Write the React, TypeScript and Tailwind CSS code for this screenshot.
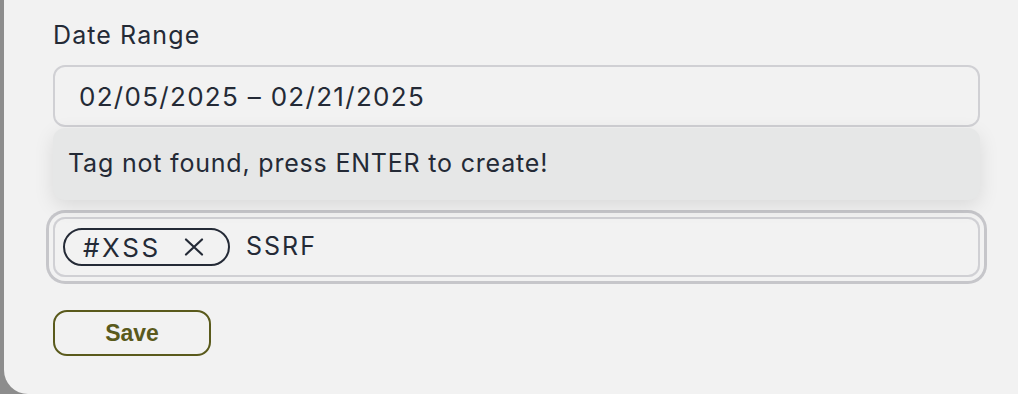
import React from "react";

export default function App() {
  const font = { fontFamily: "Inter, 'Noto Sans', sans-serif" };
  return (
    <div className="w-[1018px] h-[394px] bg-[#8d8d8d] flex overflow-hidden" style={font}>
      <div className="ml-[4px] flex-1 bg-[#f2f2f2] rounded-bl-[24px] pl-[49px] pr-[38px] pt-[20px] text-[#242a36]">
        <div className="text-[25px] leading-[30px] tracking-[0.044em]">Date Range</div>
        <div className="mt-[15px] h-[62px] border-2 border-[#d0d0d4] rounded-[12px] flex items-center px-[24px] text-[26px] tracking-[0.05em]">
          02/05/2025 – 02/21/2025
        </div>
        <div className="relative mt-[90px]">
          <div className="absolute left-0 right-0 -top-[89px] h-[72px] bg-[#e6e7e7] rounded-[12px] shadow-[0_6px_20px_rgba(0,0,0,0.10)] flex items-center pl-[15px] text-[25px] tracking-[0.032em] z-10">
            Tag not found, press ENTER to create!
          </div>
          <div className="h-[60px] border-2 border-[#d0d0d4] rounded-[12px] ring-[3px] ring-[#c6c6ca] ring-offset-[4px] ring-offset-[#f2f2f2] flex items-center pl-[8px] gap-[16px]">
            <div className="h-[38px] border-2 border-[#242a36] rounded-full flex items-center pl-[18px] pr-[24px] gap-[14px] text-[26px]">
              <span className="w-[87px] tracking-[0.1em] whitespace-nowrap">#XSS</span>
              <svg width="20" height="18" viewBox="0 0 20 18" fill="none" stroke="#242a36" strokeWidth="2.2" strokeLinecap="round">
                <path d="M2 1.5 L18 16.5 M18 1.5 L2 16.5" />
              </svg>
            </div>
            <span className="text-[25px] tracking-[0.08em]">SSRF</span>
          </div>
        </div>
        <button
          className="mt-[33px] w-[158px] h-[46px] border-2 border-[#5a5a1c] rounded-[14px] text-[#5a5a1c] text-[23px] font-bold flex items-center justify-center"
          style={{ fontFamily: "'Liberation Sans', Arial, sans-serif" }}
        >
          Save
        </button>
      </div>
    </div>
  );
}
